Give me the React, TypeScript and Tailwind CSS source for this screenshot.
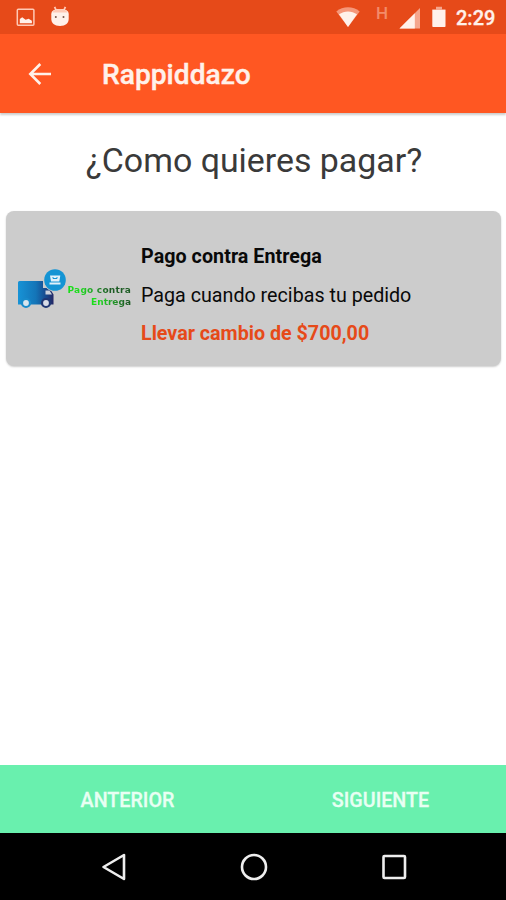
import type { ReactNode } from "react";

function StatusBar() {
    return (
        <div className="flex h-[34px] items-start justify-between bg-[#e64a19] pl-4 pr-[11px] text-[#fff1ea]">
            {/* Notifications */}
            <div className="flex gap-[14.500px] pt-1.5">
                <svg className="h-[22px] w-5" viewBox="0 0 20 22" fill="none">
                    <rect x="1.3" y="3.2" width="16.6" height="16" rx="1" stroke="#ffc9b5" strokeWidth="1.5" />
                    <path d="M3.800 17.300v-4.200l2.400-1.800 3.400 2.400 3-1 3.300 2v2.600z" fill="currentColor" />
                </svg>
                <svg className="h-[22px] w-[18px]" viewBox="0 0 18 22">
                    <path d="M3.600.8 5 4M14.400.8 13 4" stroke="#ffc9b5" strokeWidth="1.800" />
                    <path d="M.3 8.200C.3 4.600 3.500 3 9 3s8.700 1.600 8.700 5.200v4.300c0 4.700-3 7.400-8.700 7.400S.3 17.200.3 12.500z" fill="currentColor" />
                    <path d="M1.600 6.500C2.600 3.900 5 3 9 3s6.400.9 7.400 3.500z" fill="#ffc9b5" />
                    <circle cx="4.800" cy="11" r="1" fill="#795548" />
                    <circle cx="12.500" cy="11" r="1" fill="#795548" />
                </svg>
            </div>

            {/* Connection, battery and clock */}
            <div className="flex pt-1.5">
                <svg className="h-[22px] w-6" viewBox="0 0 24 22">
                    <path d="M.3 5.400C7-.2 17-.2 23.700 5.400L12 21z" fill="#f5977a" />
                    <path d="M3 8.300C8.200 4.400 15.800 4.400 21 8.300L12 21z" fill="currentColor" />
                </svg>
                <span className="ml-4 w-3 text-[17px] font-medium leading-[15px] text-[#f38b69]">H</span>
                <svg className="ml-[11px] h-[23px] w-[22px]" viewBox="0 0 22 23">
                    <path d="M21 2v20.500H.5z" fill="#f5a68d" />
                    <path d="M15.800 7.200v15.300H.5z" fill="currentColor" />
                </svg>
                <svg className="ml-[11px] h-[22px] w-[14px]" viewBox="0 0 14 22">
                    <path d="M4 .8h6v2.400h3.500V5H.3V3.200H4z" fill="#f5a68d" />
                    <rect x=".3" y="4" width="13.200" height="17" rx=".8" fill="currentColor" />
                </svg>
                <span className="ml-2.5 w-[39px] whitespace-nowrap text-[20px] font-medium leading-[25px] [-webkit-text-stroke:0.300px]">2:29</span>
            </div>
        </div>
    );
}

function Toolbar() {
    return (
        <header className="flex h-[79px] items-center bg-[#ff5722] pl-[27px] text-[#fff1ea] shadow-[0_2px_2px_rgba(0,0,0,0.2)]">
            <button aria-label="Volver">
                <svg className="block h-6 w-6" viewBox="0 0 24 24" fill="none" stroke="currentColor" strokeWidth="2.600">
                    <path d="M24 12H3.500M13.300 2 3.300 12l10 10" />
                </svg>
            </button>
            <h1 className="ml-[51px] pt-0.5 text-[28.200px] font-medium leading-8 [-webkit-text-stroke:0.400px]">Rappiddazo</h1>
        </header>
    );
}

function DeliveryLogo() {
    return (
        <div className="flex h-[46px] w-[116px] shrink-0">
            <svg className="h-[46px] w-[49px] shrink-0" viewBox="0 0 49 46">
                <defs>
                    <linearGradient id="truck" x1="0" x2="1">
                        <stop offset="0" stopColor="#1793d6" />
                        <stop offset=".5" stopColor="#1475b8" />
                        <stop offset=".8" stopColor="#17468a" />
                        <stop offset="1" stopColor="#252764" />
                    </linearGradient>
                </defs>
                <path d="M2.500 15h23.500v7h6.500l4 6.500v10H1v-22Q1 15 2.500 15z" fill="url(#truck)" />
                <path d="M28.500 24.500h4l2.500 4h-6.500z" fill="#cbd2dc" />
                <circle cx="9" cy="37" r="4" fill="#d7e5ee" stroke="#188bcb" strokeWidth="2.200" />
                <circle cx="29" cy="37" r="4" fill="#d7dce7" stroke="#203773" strokeWidth="2.200" />
                <circle cx="38" cy="14" r="11.600" fill="#ccc" />
                <circle cx="38" cy="14" r="10.800" fill="#1494d4" />
                <path d="M33 9.500h10.300l-1 6h-8.300zM32.500 16.500h11v2h-11z" fill="#e1f1fa" />
                <path d="M36 11v1.500h4V11" fill="none" stroke="#1494d4" />
            </svg>
            <div className="flex w-[65px] flex-col items-end pt-[18px] font-['DejaVu_Sans'] text-[9px] font-bold leading-[12px]">
                <span className="whitespace-nowrap bg-linear-to-r from-[#1bdd1b] from-20% to-[#1d5c24] to-65% bg-clip-text tracking-[0.230px] text-transparent">Pago contra</span>
                <span className="bg-linear-to-r from-[#1bdd1b] from-20% to-[#1d5c24] to-90% bg-clip-text text-transparent">Entrega</span>
            </div>
        </div>
    );
}

function PaymentCard() {
    return (
        <section className="ml-1.5 mr-[5px] flex h-[155px] items-center rounded-lg bg-[#ccc] pl-[11px] shadow-[0_1px_2px_rgba(0,0,0,0.2)]">
            <DeliveryLogo />
            <div className="ml-2 pt-[15px] text-[19.700px] leading-[38.500px] text-[#090909]">
                <p className="font-bold tracking-[0.050px]">Pago contra Entrega</p>
                <p>Paga cuando recibas tu pedido</p>
                <p className="font-bold text-[#e64a19]">Llevar cambio de $700,00</p>
            </div>
        </section>
    );
}

function NavIcon({ children }: { children: ReactNode }) {
    return (
        <svg className="h-7 w-7" viewBox="0 0 28 28" fill="none" stroke="#eee" strokeWidth="2.600" strokeLinejoin="round">
            {children}
        </svg>
    );
}

export default function App() {
    return (
        <div className="flex h-[900px] w-[506px] flex-col overflow-hidden bg-white font-[Roboto,sans-serif]">
            <StatusBar />
            <Toolbar />

            <main className="flex-1">
                <h2 className="pl-0.5 pt-7 pb-[30px] text-center text-[33.900px] leading-10 text-[#3a3a3a]">
                    ¿Como quieres pagar?
                </h2>
                <PaymentCard />
            </main>

            <div className="grid h-[68px] grid-cols-2 bg-[#69f0ae] pt-[3px] text-[19.700px] font-medium text-[#e8fff3] [-webkit-text-stroke:0.300px]">
                <button className="pl-0.5">ANTERIOR</button>
                <button className="pl-0.5">SIGUIENTE</button>
            </div>

            {/* System navigation */}
            <nav className="flex h-[67px] items-center justify-between bg-black pl-[99px] pr-[98px]">
                <NavIcon><path d="M25 2v24L4.500 14z" /></NavIcon>
                <NavIcon><circle cx="14" cy="14" r="12" /></NavIcon>
                <NavIcon><rect x="3.500" y="3" width="21.500" height="22" rx="1" /></NavIcon>
            </nav>
        </div>
    );
}
